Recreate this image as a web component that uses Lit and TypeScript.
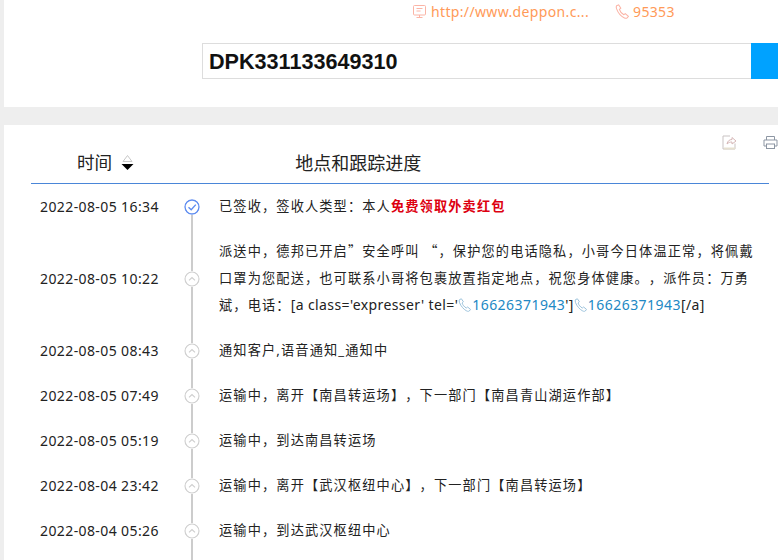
import { LitElement, html, css, svg } from "lit";
import { customElement } from "lit/decorators.js";

const phone = (c: string, s = 14) => html`<svg class="ph" width=${s} height=${s} viewBox="0 0 14 14" fill="none" stroke=${c} stroke-width="1"><path d="M1.5 1.6 3.4.8l2 3-1.3 1.2c.5 1.8 2.1 3.9 4.2 5l1.3-1 2.9 2.4-1.2 1.6c-.6.5-1.6.4-2.5 0C6 11.700 2.800 8.200 1.500 4.600c-.4-1.200-.4-2.300 0-3Z"/></svg>`;

const rows: { t: string; body: unknown; done?: boolean }[] = [
  { t: "2022-08-05 16:34", done: true, body: html`已签收，签收人类型：本人<b class="red">免费领取外卖红包</b>` },
  {
    t: "2022-08-05 10:22",
    body: html`派送中，德邦已开启<span class="q">”</span>安全呼叫 <span class="q">“</span>，保护您的电话隐私，小哥今日体温正常，将佩戴口罩为您配送，也可联系小哥将包裹放置指定地点，祝您身体健康。，派件员：万勇斌，电话：<span class="lat">[a class='expresser' tel='</span><span class="tel">${phone("#9cc3dc")}16626371943</span><span class="lat">']</span><span class="tel">${phone("#9cc3dc")}16626371943</span><span class="lat">[/a]</span>`,
  },
  { t: "2022-08-05 08:43", body: "通知客户,语音通知_通知中" },
  { t: "2022-08-05 07:49", body: "运输中，离开【南昌转运场】，下一部门【南昌青山湖运作部】" },
  { t: "2022-08-05 05:19", body: "运输中，到达南昌转运场" },
  { t: "2022-08-04 23:42", body: "运输中，离开【武汉枢纽中心】，下一部门【南昌转运场】" },
  { t: "2022-08-04 05:26", body: "运输中，到达武汉枢纽中心" },
];

@customElement("app-root")
export class AppRoot extends LitElement {
  static styles = css`
    :host {
      display: block;
      width: 778px;
      height: 560px;
      overflow: hidden;
      background: #eeeeee;
      font-family: "Noto Sans", "Noto Sans CJK SC", sans-serif;
      font-size: 14px;
      color: #222;
      box-sizing: border-box;
      padding-left: 4px;
      text-spacing-trim: space-all;
    }
    .top {
      height: 107px;
      background: #fff;
      margin-bottom: 18px;
      box-sizing: border-box;
    }
    .contact {
      height: 22px;
      display: flex;
      align-items: center;
      margin-left: 408px;
      color: #ff9a58;
      font-size: 14px;
      letter-spacing: 0.35px;
      white-space: nowrap;
    }
    .contact svg { flex: none; }
    .site { margin: 0 26px 0 4px; }
    .num { margin-left: 3px; }
    .search {
      display: flex;
      height: 36px;
      margin: 21px 0 0 198px;
    }
    .field {
      flex: 1;
      border: 1px solid #dddddd;
      border-right: 0;
      padding-left: 6px;
      font: bold 21.6px/36px "Liberation Sans", sans-serif;
      color: #111;
    }
    .btn { width: 27px; background: #00a2ff; }
    .panel {
      height: 435px;
      background: #fff;
      padding-left: 27px;
      position: relative;
    }
    .tools {
      position: absolute;
      top: 10px;
      right: 0;
      display: flex;
      gap: 26px;
    }
    .head {
      width: 738px;
      height: 59px;
      box-sizing: border-box;
      border-bottom: 1px solid #4a86d8;
      display: flex;
      align-items: center;
      font-size: 17.6px;
      padding: 15px 0 0 46px;
      color: #222;
    }
    .sort { margin: 1px 0 0 9px; }
    .place { margin-left: 161px; font-size: 18px; }
    .row {
      display: grid;
      grid-template-columns: 145px 32px 547px;
      width: 738px;
      align-items: center;
    }
    .time {
      padding-left: 9px;
      letter-spacing: 0.4px;
      white-space: nowrap;
    }
    .axis {
      align-self: stretch;
      position: relative;
      display: flex;
      align-items: center;
      justify-content: center;
    }
    .line {
      position: absolute;
      left: 15px;
      width: 2px;
      top: 0;
      bottom: 0;
      background: #cccccc;
    }
    .row.first .line { top: 50%; }
    .row:last-child .line { bottom: -10px; }
    .node { position: relative; display: block; background: #fff; border-radius: 50%; }
    .text {
      margin-left: 11px;
      padding: 9px 0;
      line-height: 27px;
      font-size: 13.2px;
      letter-spacing: 1.14px;
    }
    .q { font-family: "Noto Sans CJK SC", sans-serif; line-height: 1; }
    .lat { font-size: 14px; letter-spacing: 0.4px; line-height: 1; }
    .red { color: #dd0010; font-weight: 700; }
    .tel { color: #2188c4; letter-spacing: 0.45px; font-size: 14px; line-height: 1; }
    .ph { vertical-align: -2px; }
  `;

  render() {
    return html`
      <div class="top">
        <div class="contact">
          <svg width="15" height="15" viewBox="0 0 15 15" fill="none" stroke="#fbb4a6" stroke-width="1">
            <rect x="1.5" y="1.5" width="12" height="9.500" rx="1"/>
            <path d="M4.500 4.500h6M4.500 7h4M7.500 11v2.500M4.500 13.500h6"/>
          </svg>
          <span class="site">http://www.deppon.c...</span>
          ${phone("#fbb4a6", 15)}
          <span class="num">95353</span>
        </div>
        <div class="search">
          <div class="field">DPK331133649310</div>
          <div class="btn"></div>
        </div>
      </div>
      <div class="panel">
        <div class="tools">
          <svg width="15" height="15" viewBox="0 0 15 15" fill="none" stroke="#c9c3c3" stroke-width="1">
            <path d="M13 8.500V14H1V1h7"/>
            <path d="M5 9c.5-3 2.500-4.500 5-4.500V2.500l4 3.500-4 3V7C8 7 6.500 7.500 5 9Z" stroke="#d6b7b7"/>
            <path d="M2 13.500h11" stroke="#e6e0d0" stroke-width="2"/>
          </svg>
          <svg width="15" height="15" viewBox="0 0 15 15" fill="none" stroke="#8d96a3" stroke-width="1">
            <path d="M3.500 5V1.500h8V5M3.500 11H1V5h13v6h-2.500"/>
            <rect x="3.500" y="9" width="8" height="4.500"/>
          </svg>
        </div>
        <div class="head">
          <span>时间</span>
          <svg class="sort" width="13" height="17" viewBox="0 0 13 17">
            <path d="M6.500 1.500 11 7.500H2Z" fill="#fff" stroke="#c8c8c8"/>
            <path d="M.5 10h12l-6 6Z" fill="#000"/>
          </svg>
          <span class="place">地点和跟踪进度</span>
        </div>
        ${rows.map(
          (r, i) => html`<div class="row ${i === 0 ? "first" : ""}">
            <div class="time">${r.t}</div>
            <div class="axis">
              <i class="line"></i>
              ${r.done
                ? svg`<svg class="node" width="16" height="16" viewBox="0 0 16 16" fill="none" stroke="#5f8df0" stroke-width="1.400"><circle cx="8" cy="8" r="7"/><path d="M4.500 8.200 7.200 10.800 11.800 5.600"/></svg>`
                : svg`<svg class="node" width="16" height="16" viewBox="0 0 16 16" fill="none" stroke="#cfcfcf" stroke-width="1.200"><circle cx="8" cy="8" r="7"/><path d="M5 9.400 8 6.500 11 9.400"/></svg>`}
            </div>
            <div class="text">${r.body}</div>
          </div>`
        )}
      </div>
    `;
  }
}
